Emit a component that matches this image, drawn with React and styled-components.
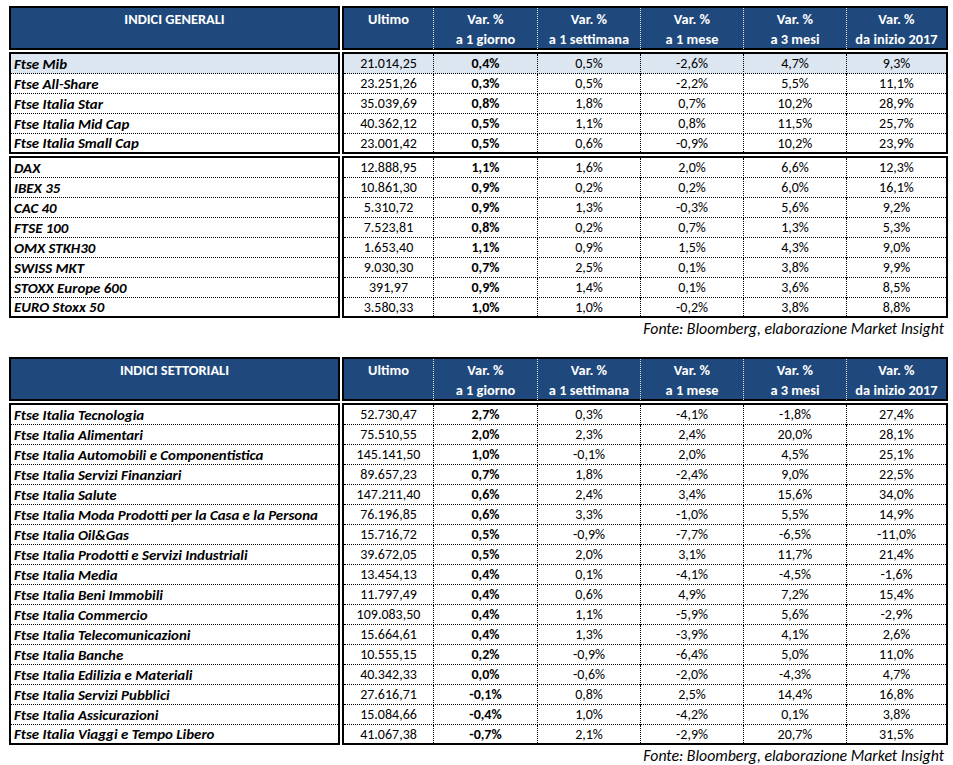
import React from 'react'
import styled, { createGlobalStyle } from 'styled-components'

const GlobalStyle = createGlobalStyle`
  body {
    margin: 0;
    background: #fff;
    font-family: Carlito, Lato, "Liberation Sans", sans-serif;
    color: #000;
  }
`

const Page = styled.div`
  padding: 6px 0 0 9px;
  width: 939px;
`

const Section = styled.div`
  margin-bottom: ${props => props.$last ? '0' : '18px'};
`

const Board = styled.div`
  display: grid;
  grid-template-columns: 331px 606px;
  gap: 2px;
`

const Block = styled.div`
  border: 2px solid #000;
`

const HeadBlock = styled(Block)`
  background: #1f497d;
  height: 44px;
  box-sizing: border-box;
  color: #fff;
  font-weight: 700;
  font-size: 14.4px;
  line-height: 20px;
`

const HeadTitle = styled.div`
  text-align: center;
  padding-top: 1px;
`

const HeadGrid = styled.div`
  display: grid;
  grid-template-columns: 90px 104px 103px 103px 103px 99px;
  height: 100%;
`

const HeadCell = styled.div`
  text-align: center;
  padding-top: 1px;
  border-right: 1px dotted rgba(255, 255, 255, 0.85);
  &:last-child {
    border-right: none;
  }
`

const NameRow = styled.div`
  height: 20px;
  box-sizing: border-box;
  border-bottom: 1px dotted #000;
  padding-left: 3px;
  font-size: 14.9px;
  font-weight: 700;
  font-style: italic;
  line-height: 20px;
  white-space: nowrap;
  background: ${props => props.$hl ? '#dce6f1' : 'transparent'};
  &:last-child {
    border-bottom: none;
    height: 18px;
    line-height: 19px;
  }
`

const ValueRow = styled.div`
  display: grid;
  grid-template-columns: 90px 104px 103px 103px 103px 99px;
  height: 20px;
  box-sizing: border-box;
  border-bottom: 1px dotted #000;
  background: ${props => props.$hl ? '#dce6f1' : 'transparent'};
  &:last-child {
    border-bottom: none;
    height: 18px;
    line-height: 19px;
  }
`

const Cell = styled.div`
  text-align: center;
  font-size: 14px;
  line-height: 20px;
  font-weight: ${props => props.$bold ? 700 : 400};
  border-right: 1px dotted #000;
  &:last-child {
    border-right: none;
  }
`

const Source = styled.div`
  text-align: right;
  font-style: italic;
  font-size: 15.8px;
  line-height: 20px;
  padding: 1px 4px 0 0;
`

const columns = [
  ['Ultimo', ''],
  ['Var. %', 'a 1 giorno'],
  ['Var. %', 'a 1 settimana'],
  ['Var. %', 'a 1 mese'],
  ['Var. %', 'a 3 mesi'],
  ['Var. %', 'da inizio 2017'],
]

const generali = [
  [
    ['Ftse Mib', '21.014,25', '0,4%', '0,5%', '-2,6%', '4,7%', '9,3%', true],
    ['Ftse All-Share', '23.251,26', '0,3%', '0,5%', '-2,2%', '5,5%', '11,1%'],
    ['Ftse Italia Star', '35.039,69', '0,8%', '1,8%', '0,7%', '10,2%', '28,9%'],
    ['Ftse Italia Mid Cap', '40.362,12', '0,5%', '1,1%', '0,8%', '11,5%', '25,7%'],
    ['Ftse Italia Small Cap', '23.001,42', '0,5%', '0,6%', '-0,9%', '10,2%', '23,9%'],
  ],
  [
    ['DAX', '12.888,95', '1,1%', '1,6%', '2,0%', '6,6%', '12,3%'],
    ['IBEX 35', '10.861,30', '0,9%', '0,2%', '0,2%', '6,0%', '16,1%'],
    ['CAC 40', '5.310,72', '0,9%', '1,3%', '-0,3%', '5,6%', '9,2%'],
    ['FTSE 100', '7.523,81', '0,8%', '0,2%', '0,7%', '1,3%', '5,3%'],
    ['OMX STKH30', '1.653,40', '1,1%', '0,9%', '1,5%', '4,3%', '9,0%'],
    ['SWISS MKT', '9.030,30', '0,7%', '2,5%', '0,1%', '3,8%', '9,9%'],
    ['STOXX Europe 600', '391,97', '0,9%', '1,4%', '0,1%', '3,6%', '8,5%'],
    ['EURO Stoxx 50', '3.580,33', '1,0%', '1,0%', '-0,2%', '3,8%', '8,8%'],
  ],
]

const settoriali = [
  [
    ['Ftse Italia Tecnologia', '52.730,47', '2,7%', '0,3%', '-4,1%', '-1,8%', '27,4%'],
    ['Ftse Italia Alimentari', '75.510,55', '2,0%', '2,3%', '2,4%', '20,0%', '28,1%'],
    ['Ftse Italia Automobili e Componentistica', '145.141,50', '1,0%', '-0,1%', '2,0%', '4,5%', '25,1%'],
    ['Ftse Italia Servizi Finanziari', '89.657,23', '0,7%', '1,8%', '-2,4%', '9,0%', '22,5%'],
    ['Ftse Italia Salute', '147.211,40', '0,6%', '2,4%', '3,4%', '15,6%', '34,0%'],
    ['Ftse Italia Moda Prodotti per la Casa e la Persona', '76.196,85', '0,6%', '3,3%', '-1,0%', '5,5%', '14,9%'],
    ['Ftse Italia Oil&Gas', '15.716,72', '0,5%', '-0,9%', '-7,7%', '-6,5%', '-11,0%'],
    ['Ftse Italia Prodotti e Servizi Industriali', '39.672,05', '0,5%', '2,0%', '3,1%', '11,7%', '21,4%'],
    ['Ftse Italia Media', '13.454,13', '0,4%', '0,1%', '-4,1%', '-4,5%', '-1,6%'],
    ['Ftse Italia Beni Immobili', '11.797,49', '0,4%', '0,6%', '4,9%', '7,2%', '15,4%'],
    ['Ftse Italia Commercio', '109.083,50', '0,4%', '1,1%', '-5,9%', '5,6%', '-2,9%'],
    ['Ftse Italia Telecomunicazioni', '15.664,61', '0,4%', '1,3%', '-3,9%', '4,1%', '2,6%'],
    ['Ftse Italia Banche', '10.555,15', '0,2%', '-0,9%', '-6,4%', '5,0%', '11,0%'],
    ['Ftse Italia Edilizia e Materiali', '40.342,33', '0,0%', '-0,6%', '-2,0%', '-4,3%', '4,7%'],
    ['Ftse Italia Servizi Pubblici', '27.616,71', '-0,1%', '0,8%', '2,5%', '14,4%', '16,8%'],
    ['Ftse Italia Assicurazioni', '15.084,66', '-0,4%', '1,0%', '-4,2%', '0,1%', '3,8%'],
    ['Ftse Italia Viaggi e Tempo Libero', '41.067,38', '-0,7%', '2,1%', '-2,9%', '20,7%', '31,5%'],
  ],
]

const IndexTable = ({ title, groups, last }) => (
  <Section $last={last}>
    <Board>
      <HeadBlock>
        <HeadTitle>{title}</HeadTitle>
      </HeadBlock>
      <HeadBlock>
        <HeadGrid>
          {columns.map(([top, bottom]) => (
            <HeadCell key={top + bottom}>
              <div>{top}</div>
              <div>{bottom}</div>
            </HeadCell>
          ))}
        </HeadGrid>
      </HeadBlock>
      {groups.map((rows, g) => (
        <React.Fragment key={g}>
          <Block>
            {rows.map(r => (
              <NameRow key={r[0]} $hl={r[7]}>{r[0]}</NameRow>
            ))}
          </Block>
          <Block>
            {rows.map(r => (
              <ValueRow key={r[0]} $hl={r[7]}>
                {r.slice(1, 7).map((v, i) => (
                  <Cell key={i} $bold={i === 1}>{v}</Cell>
                ))}
              </ValueRow>
            ))}
          </Block>
        </React.Fragment>
      ))}
    </Board>
    <Source>Fonte: Bloomberg, elaborazione Market Insight</Source>
  </Section>
)

const App = () => (
  <Page>
    <GlobalStyle />
    <IndexTable title="INDICI GENERALI" groups={generali} />
    <IndexTable title="INDICI SETTORIALI" groups={settoriali} last />
  </Page>
)

export default App
